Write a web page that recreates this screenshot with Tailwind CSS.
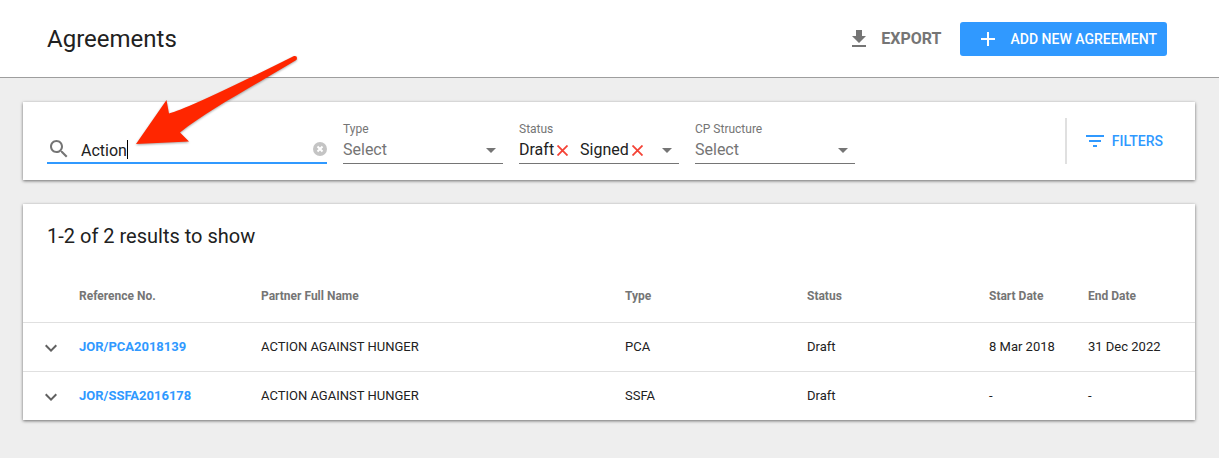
<!DOCTYPE html>
<html lang="en">
<head>
  <meta charset="UTF-8">
  <meta name="viewport" content="width=device-width, initial-scale=1">
  <title>Agreements</title>
  <script src="https://cdn.jsdelivr.net/npm/@tailwindcss/browser@4"></script>
</head>
<body class="relative min-h-screen bg-[#eeeeee] font-['Roboto',sans-serif] text-[#212121]">
  <header class="flex items-center justify-between h-[78px] pl-[47px] pr-[52px] bg-white border-b border-[#9e9e9e]">
    <h1 class="text-2xl">Agreements</h1>
    <div class="flex items-center gap-[18px]">
      <button class="flex items-center gap-[10px] font-bold text-base leading-5 text-[#757575]">
        <svg class="size-6" viewBox="0 0 24 24" fill="currentColor"><path d="M19 9h-4V3H9v6H5l7 7 7-7zM5 18v2h14v-2H5z"/></svg>
        EXPORT
      </button>
      <button class="flex items-center gap-[11px] h-[34px] pl-4 pr-[10px] rounded-[3px] bg-[#3099ff] text-white text-sm font-medium">
        <svg class="size-6" viewBox="0 0 24 24" fill="currentColor"><path d="M19 13h-6v6h-2v-6H5v-2h6V5h2v6h6v2z"/></svg>
        ADD NEW AGREEMENT
      </button>
    </div>
  </header>

  <main class="flex flex-col gap-6 pt-6 pl-[23px] pr-6">
    <!-- filters -->
    <section class="flex items-stretch justify-between px-6 py-4 bg-white shadow-[0_1px_3px_rgba(0,0,0,0.55)]">
      <div class="flex items-end gap-4">
        <div class="flex items-center w-[280px] h-7 border-b-2 border-[#3099ff]">
          <svg class="size-6 mr-[10px] text-[#757575]" viewBox="0 0 24 24" fill="currentColor"><path d="M15.5 14h-.79l-.28-.27C15.41 12.59 16 11.11 16 9.5 16 5.91 13.09 3 9.5 3S3 5.91 3 9.5 5.91 16 9.5 16c1.61 0 3.09-.59 4.23-1.57l.27.28v.79l5 4.99L20.49 19l-4.99-5zm-6 0C7.01 14 5 11.99 5 9.5S7.01 5 9.5 5 14 7.01 14 9.5 11.99 14 9.5 14z"/></svg>
          <input type="text" value="Action" aria-label="Search" class="field-sizing-content h-full pt-0.5 text-base outline-none">
          <span class="w-px h-[19px] bg-black"></span>
          <button class="ml-auto" aria-label="Clear search">
            <svg class="size-[14px]" viewBox="0 0 14 14"><circle cx="7" cy="7" r="7" fill="#c4c4c4"/><path d="M4.5 4.5l5 5M9.5 4.5l-5 5" stroke="#fff" stroke-width="2"/></svg>
          </button>
        </div>

        <div class="w-40 border-b border-[#757575] text-[#757575]">
          <label for="type" class="block text-xs">Type</label>
          <div class="relative h-[26px]">
            <select id="type" class="w-full h-full appearance-none text-base outline-none">
              <option>Select</option>
            </select>
            <svg class="absolute right-0 top-px size-6 pointer-events-none" viewBox="0 0 24 24" fill="currentColor"><path d="M7 10l5 5 5-5z"/></svg>
          </div>
        </div>

        <div class="w-40 border-b border-[#757575] text-[#757575]">
          <label for="status" class="block text-xs">Status</label>
          <div class="relative flex items-center h-[26px]">
            <span class="flex items-center gap-[3px] mr-3 text-[#212121]">Draft
              <button aria-label="Remove Draft"><svg class="size-[11px]" viewBox="0 0 11 11" fill="none" stroke="#f44336" stroke-width="1.8"><path d="M.5.5l10 10M10.5.5l-10 10"/></svg></button>
            </span>
            <span class="flex items-center gap-[3px] text-[#212121]">Signed
              <button aria-label="Remove Signed"><svg class="size-[11px]" viewBox="0 0 11 11" fill="none" stroke="#f44336" stroke-width="1.8"><path d="M.5.5l10 10M10.5.5l-10 10"/></svg></button>
            </span>
            <select id="status" class="flex-1 min-w-0 h-full appearance-none outline-none">
              <option></option>
            </select>
            <svg class="absolute right-0 top-px size-6 pointer-events-none" viewBox="0 0 24 24" fill="currentColor"><path d="M7 10l5 5 5-5z"/></svg>
          </div>
        </div>

        <div class="w-40 border-b border-[#757575] text-[#757575]">
          <label for="structure" class="block text-xs">CP Structure</label>
          <div class="relative h-[26px]">
            <select id="structure" class="w-full h-full appearance-none text-base outline-none">
              <option>Select</option>
            </select>
            <svg class="absolute right-0 top-px size-6 pointer-events-none" viewBox="0 0 24 24" fill="currentColor"><path d="M7 10l5 5 5-5z"/></svg>
          </div>
        </div>
      </div>

      <div class="flex items-center h-[46px] pl-4 pr-2 border-l-2 border-[#e0e0e0]">
        <button class="flex items-center gap-[5px] text-sm font-medium text-[#3099ff]">
          <svg class="size-6" viewBox="0 0 24 24" fill="currentColor"><path d="M10 18h4v-2h-4v2zM3 6v2h18V6H3zm3 7h12v-2H6v2z"/></svg>
          FILTERS
        </button>
      </div>
    </section>

    <!-- results -->
    <section class="bg-white shadow-[0_1px_3px_rgba(0,0,0,0.55)]">
      <h2 class="flex items-center h-16 px-6 text-xl">1-2 of 2 results to show</h2>
      <table class="w-full table-fixed text-left text-[13px]">
        <colgroup>
          <col class="w-14">
          <col class="w-[182px]">
          <col>
          <col class="w-[182px]">
          <col class="w-[182px]">
          <col class="w-[99px]">
          <col class="w-[107px]">
        </colgroup>
        <thead>
          <tr class="h-[54px] text-xs text-[#757575]">
            <td></td>
            <th class="pt-[3px] font-bold">Reference No.</th>
            <th class="pt-[3px] font-bold">Partner Full Name</th>
            <th class="pt-[3px] font-bold">Type</th>
            <th class="pt-[3px] font-bold">Status</th>
            <th class="pt-[3px] font-bold">Start Date</th>
            <th class="pt-[3px] font-bold">End Date</th>
          </tr>
        </thead>
        <tbody>
          <tr class="h-[49px] border-t border-[#e0e0e0]">
            <td class="pl-4">
              <button class="block" aria-label="Expand row"><svg class="size-6 mt-[3px] text-[#616161]" viewBox="0 0 24 24" fill="currentColor"><path d="M16.59 8.59L12 13.17 7.41 8.59 6 10l6 6 6-6z"/></svg></button>
            </td>
            <td><a href="#" class="font-bold text-[#3099ff]">JOR/PCA2018139</a></td>
            <td>ACTION AGAINST HUNGER</td>
            <td>PCA</td>
            <td>Draft</td>
            <td>8 Mar 2018</td>
            <td>31 Dec 2022</td>
          </tr>
          <tr class="h-[49px] border-t border-[#e0e0e0]">
            <td class="pl-4">
              <button class="block" aria-label="Expand row"><svg class="size-6 mt-[3px] text-[#616161]" viewBox="0 0 24 24" fill="currentColor"><path d="M16.59 8.59L12 13.17 7.41 8.59 6 10l6 6 6-6z"/></svg></button>
            </td>
            <td><a href="#" class="font-bold text-[#3099ff]">JOR/SSFA2016178</a></td>
            <td>ACTION AGAINST HUNGER</td>
            <td>SSFA</td>
            <td>Draft</td>
            <td>-</td>
            <td>-</td>
          </tr>
        </tbody>
      </table>
    </section>
  </main>

  <!-- arrow pointing at the search field -->
  <svg class="absolute left-[130px] top-[50px] w-[175px] h-[102px] pointer-events-none drop-shadow-[0_1px_1px_rgba(0,0,0,0.35)]" viewBox="130 50 175 102" fill="#ff2600">
    <path d="M136 144L166.500 100L169 113.500Q188 109 294 56Q297 55.500 297 58Q297 60 295.500 60.500C250 88 208 110 180 132.500L189 141.500Z"/>
  </svg>
</body>
</html>
